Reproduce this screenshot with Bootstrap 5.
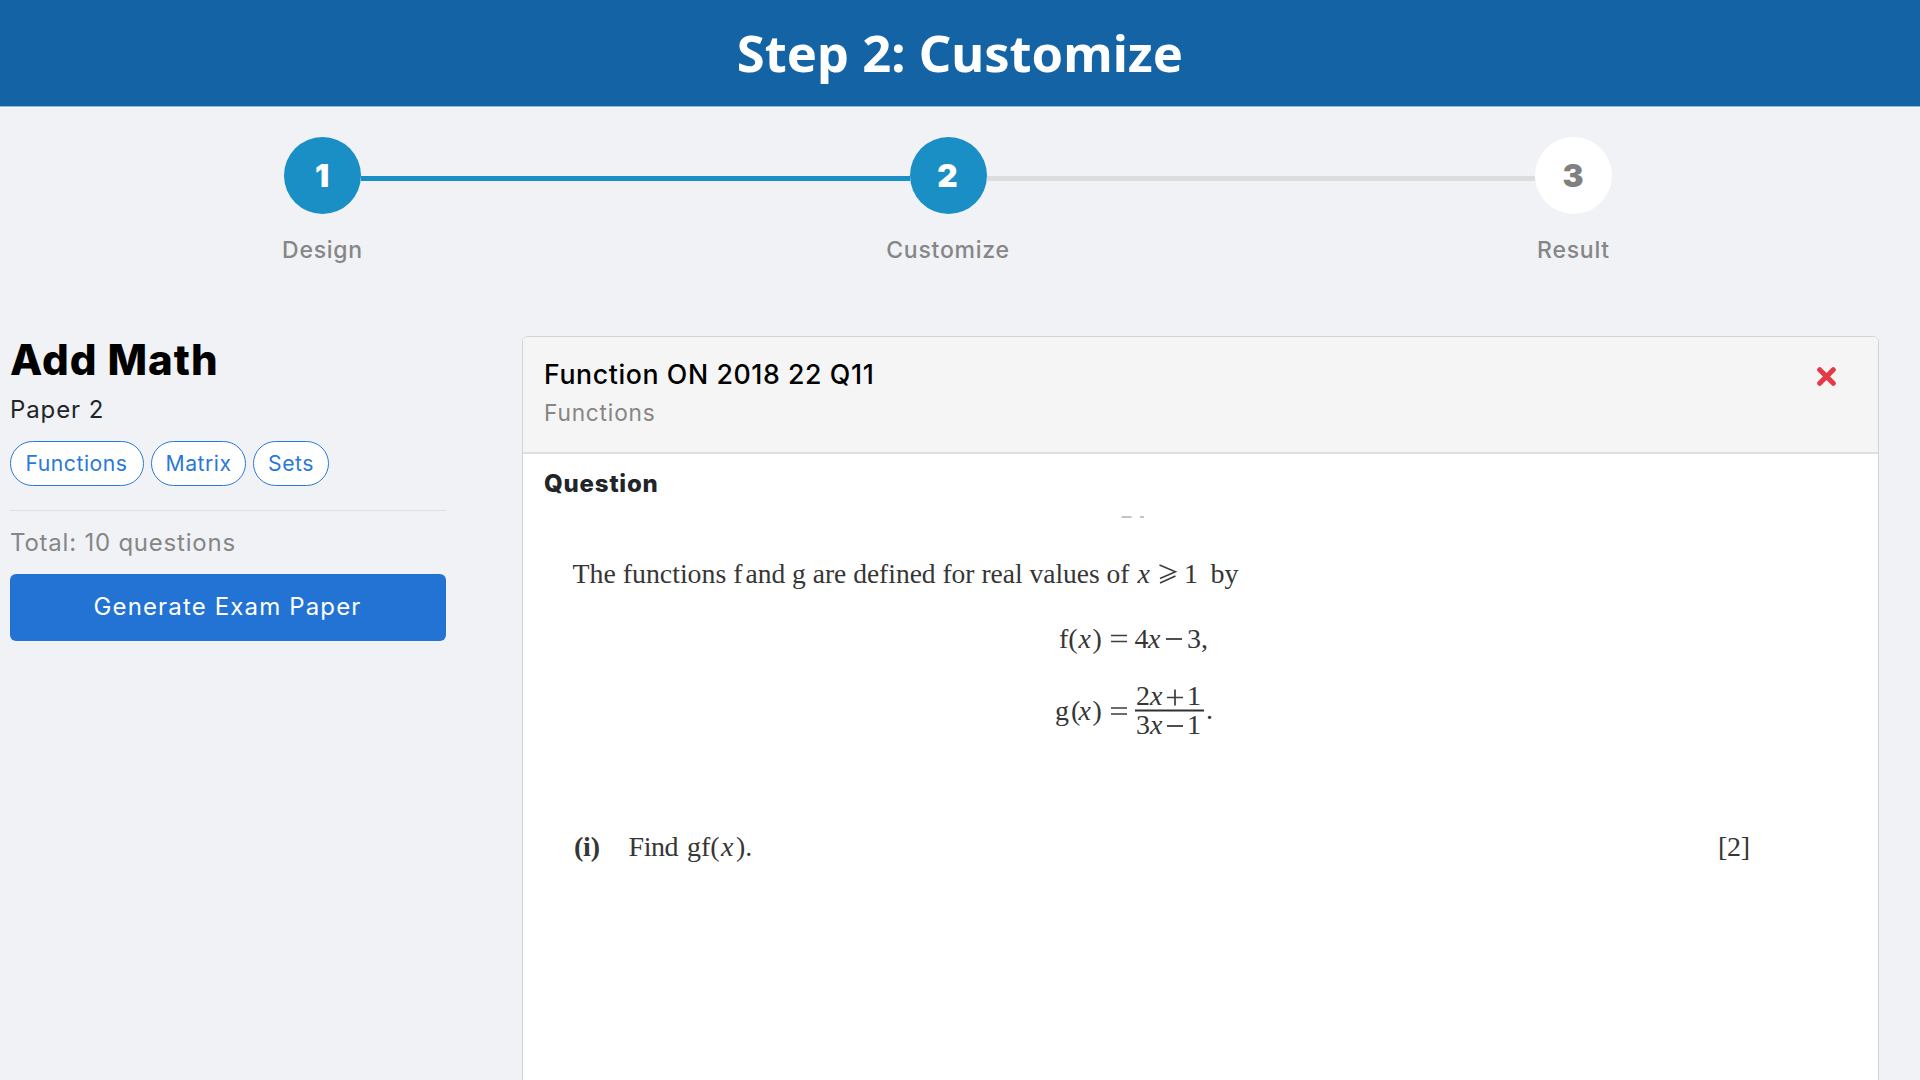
<!DOCTYPE html>
<html lang="en">
<head>
<meta charset="utf-8">
<meta name="viewport" content="width=device-width, initial-scale=1">
<title>Step 2: Customize</title>
<link href="https://cdn.jsdelivr.net/npm/bootstrap@5.3.0/dist/css/bootstrap.min.css" rel="stylesheet">
<style>
body{font-family:Inter,"Open Sans",sans-serif;background:#f0f2f6;color:#212529;height:1080px;overflow:hidden;line-height:1}
.topbar{height:107px;background:#1463a5;border-bottom:1px solid #8fb6d6;box-shadow:0 1px #fafcff;padding-top:9px}
.topbar h1{font:700 50.7px/88px "Noto Sans","Open Sans",sans-serif;margin:0}
.stepper{height:229px;padding:30px 308px 0 284px}
.stepitem{width:77px}
.stepline{height:5px;margin-top:39px;background:#ddd}
.stepline.done{background:#198fc5}
.dot{width:77px;height:77px;font-size:31.5px;font-weight:900;color:#fff;background:#198fc5;padding-right:1px}
.dot.todo{background:#fff;color:#808080}
.steplabel{font-size:23px;font-weight:500;color:#868686;margin-top:25px;line-height:23px;letter-spacing:.75px;white-space:nowrap}
.side{width:436px;margin-left:10px}
.side h2{font-size:42px;font-weight:800;color:#000;line-height:48px;letter-spacing:.95px;margin:0 0 -1px}
.paperno{font-size:24px;line-height:53px;letter-spacing:.9px;margin-bottom:5px}
.pill{height:45px;border:1px solid #2a79d8;background:#fff;color:#2a79d8;border-radius:23px;font-size:21.2px;letter-spacing:.5px}
.pill-a{width:134px;padding-right:1px}.pill-b{width:95px}.pill-c{width:76px}
.pills{gap:7px}
.rule{height:1px;background:#dcdfe4;margin-top:24px}
.total{font-size:24px;line-height:63px;letter-spacing:.78px}
.gen,.gen:hover{height:67px;background:#2273d3;border:0;border-radius:6px;color:#fff;font-size:24px;letter-spacing:1.15px}
.gen span{margin-top:-2px;margin-left:-1px}
.qcard{width:1357px;margin-left:76px;height:760px;border:1px solid #d2d3d4;border-radius:6px 6px 0 0;background:#fff}
.qhead{height:117px;background:#f5f5f5;border-bottom:2px solid #dfdfdf;border-radius:5px 5px 0 0;padding:15px 42px 0 21px}
.qtitle{font-size:26.7px;font-weight:500;line-height:44px;letter-spacing:.6px;color:#000;margin:0}
.qtopic{font-size:22.7px;line-height:34px;letter-spacing:.8px}
.close-x{margin-top:15px}
.qlabel{font-size:24px;font-weight:800;line-height:60px;letter-spacing:.8px;padding-left:21px;margin:0 0 -1px}
.muted{color:#868686}
.sheet{font-family:"Liberation Serif",serif;font-size:28px;fill:#363636}
.it{font-style:italic}
</style>
</head>
<body>
<header class="topbar text-white text-center"><h1>Step 2: Customize</h1></header>

<section class="stepper d-flex">
  <div class="stepitem d-flex flex-column align-items-center">
    <div class="dot rounded-circle d-flex align-items-center justify-content-center">1</div>
    <div class="steplabel">Design</div>
  </div>
  <div class="stepline done flex-fill"></div>
  <div class="stepitem d-flex flex-column align-items-center">
    <div class="dot rounded-circle d-flex align-items-center justify-content-center">2</div>
    <div class="steplabel">Customize</div>
  </div>
  <div class="stepline flex-fill"></div>
  <div class="stepitem d-flex flex-column align-items-center">
    <div class="dot todo rounded-circle d-flex align-items-center justify-content-center">3</div>
    <div class="steplabel">Result</div>
  </div>
</section>

<main class="d-flex align-items-start">
  <aside class="side">
    <h2>Add Math</h2>
    <div class="paperno">Paper 2</div>
    <div class="pills d-flex">
      <span class="pill pill-a d-flex align-items-center justify-content-center">Functions</span>
      <span class="pill pill-b d-flex align-items-center justify-content-center">Matrix</span>
      <span class="pill pill-c d-flex align-items-center justify-content-center">Sets</span>
    </div>
    <div class="rule"></div>
    <div class="total muted">Total: 10 questions</div>
    <button type="button" class="btn gen w-100 p-0 d-flex align-items-center justify-content-center"><span>Generate Exam Paper</span></button>
  </aside>

  <section class="qcard">
    <div class="qhead d-flex justify-content-between align-items-start">
      <div>
        <h3 class="qtitle">Function ON 2018 22 Q11</h3>
        <div class="qtopic muted">Functions</div>
      </div>
      <svg class="close-x" width="19" height="19" viewBox="0 0 19 19"><path d="M2.7 2.7 16.3 16.3M16.3 2.7 2.7 16.3" stroke="#e63946" stroke-width="5" stroke-linecap="round"/></svg>
    </div>
    <h4 class="qlabel">Question</h4>
    <!-- scanned question sheet -->
    <svg class="sheet d-block" width="1355" height="567" viewBox="523 513 1355 567">
      <path d="M1121.500 517h10M1140 517h4" stroke="#b0b0b0" stroke-width="1.600"/>
      <text x="572.500" y="583" textLength="170" lengthAdjust="spacingAndGlyphs">The functions f</text>
      <text x="745.500" y="583" textLength="384" lengthAdjust="spacingAndGlyphs">and g are defined for real values of</text>
      <text x="1137.500" y="583" class="it">x</text>
      <path d="M1159.500 565 1175.500 571.800 1160 578.500M1160 583 1175.500 576" fill="none" stroke="#3c3c3c" stroke-width="1.500"/>
      <text x="1184" y="583">1</text>
      <text x="1210.500" y="583">by</text>

      <text x="1059" y="647.500">f(</text>
      <text x="1078.500" y="647.500" class="it">x</text>
      <text x="1092.500" y="647.500">)</text>
      <path d="M1111 635.500h16M1111 641.500h16" stroke="#3c3c3c" stroke-width="1.700"/>
      <text x="1134.500" y="647.500">4</text>
      <text x="1148" y="647.500" class="it">x</text>
      <path d="M1166 639h16" stroke="#3c3c3c" stroke-width="1.800"/>
      <text x="1187" y="647.500">3</text>
      <text x="1201" y="647.500">,</text>

      <text x="1055" y="719.500">g</text>
      <text x="1071" y="719.500">(</text>
      <text x="1078.500" y="719.500" class="it">x</text>
      <text x="1092.500" y="719.500">)</text>
      <path d="M1111 708h16M1111 714h16" stroke="#3c3c3c" stroke-width="1.700"/>
      <path d="M1135 710.500h69" stroke="#303030" stroke-width="2"/>
      <text x="1136" y="704.500">2</text>
      <text x="1150" y="704.500" class="it">x</text>
      <path d="M1167 697.500h16M1175 689.500v16" stroke="#3c3c3c" stroke-width="1.700"/>
      <text x="1187" y="704.500">1</text>
      <text x="1136" y="734">3</text>
      <text x="1150" y="734" class="it">x</text>
      <path d="M1167 726h16" stroke="#3c3c3c" stroke-width="1.800"/>
      <text x="1187" y="734">1</text>
      <text x="1206" y="718.500">.</text>

      <text x="574" y="856" font-weight="700" textLength="26">(i)</text>
      <text x="628.500" y="856" textLength="50">Find</text>
      <text x="687" y="856">gf(</text>
      <text x="721" y="856" class="it">x</text>
      <text x="736" y="856">).</text>
      <text x="1718" y="856" textLength="32">[2]</text>
    </svg>
  </section>
</main>
<script src="https://cdn.jsdelivr.net/npm/bootstrap@5.3.0/dist/js/bootstrap.bundle.min.js"></script>
</body>
</html>
